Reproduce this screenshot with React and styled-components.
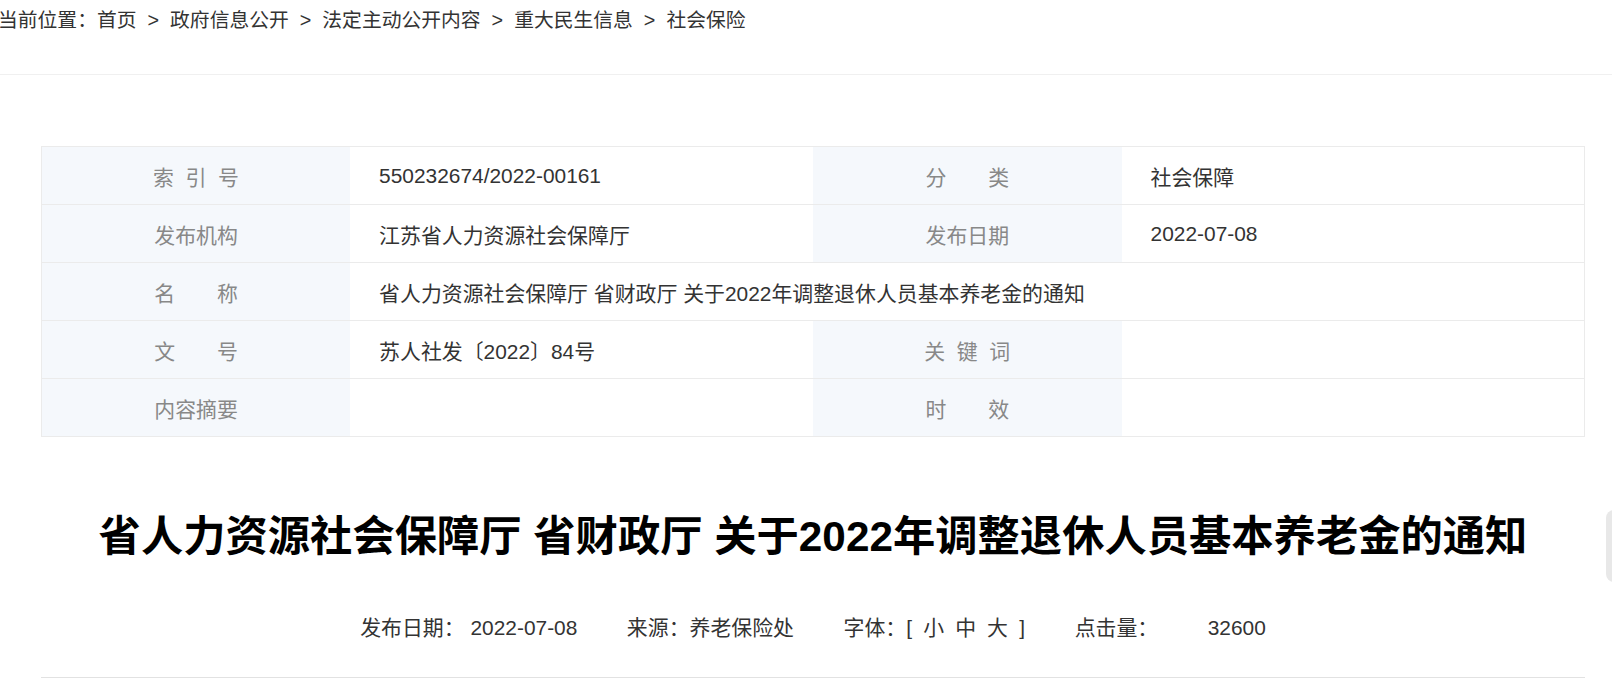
import React from 'react'
import styled, { createGlobalStyle } from 'styled-components'

const GlobalStyle = createGlobalStyle`
  html, body {
    margin: 0;
    padding: 0;
    background: #fff;
  }
  body {
    font-family: "Liberation Sans", "Noto Sans CJK SC", sans-serif;
    color: #333;
    overflow: hidden;
  }
`

const Header = styled.div`
  height: 74px;
  border-bottom: 1px solid #f0f0f0;
`

const Breadcrumb = styled.div`
  margin-left: -2px;
  font-size: 19.8px;
  line-height: 41px;
  color: #333;
  white-space: nowrap;
`

const Sep = styled.span`
  margin: 0 11px;
`

const Main = styled.div`
  margin: 71px 27px 0 41px;
`

const InfoTable = styled.table`
  width: 100%;
  border-collapse: collapse;
  table-layout: fixed;
  border: 1px solid #ebebeb;
  font-size: 20.9px;
`

const Row = styled.tr`
  height: 58px;
  border-bottom: 1px solid #ebebeb;
`

const Label = styled.td`
  box-sizing: border-box;
  width: 20%;
  background: #f5f8fc;
  color: #888;
  text-align: center;
  padding: 0;
  white-space: nowrap;
`

const Value = styled.td`
  box-sizing: border-box;
  width: 30%;
  background: #fff;
  color: #333;
  padding: 0 0 0 29px;
  white-space: nowrap;
`

const Title = styled.h1`
  margin: 70px 0 0;
  font-size: 42.3px;
  line-height: 60px;
  font-weight: bold;
  color: #000;
  text-align: center;
  white-space: nowrap;
`

const Meta = styled.div`
  display: flex;
  justify-content: center;
  gap: 49.5px;
  margin-top: 46px;
  padding-bottom: 34px;
  border-bottom: 1px solid #e2e2e2;
  font-size: 20.9px;
  line-height: 30px;
  color: #333;
  white-space: nowrap;
`

const FontSize = styled.span`
  padding: 0 5.5px;
  cursor: pointer;
`

const SideTab = styled.div`
  position: fixed;
  right: -44px;
  top: 510px;
  width: 50px;
  height: 72px;
  border-radius: 8px;
  background: #e8e8e8;
`

const crumbs = ['首页', '政府信息公开', '法定主动公开内容', '重大民生信息', '社会保险']

const nb = '\u00a0\u00a0'

export default function App() {
  return (
    <>
      <GlobalStyle />
      <Header>
        <Breadcrumb>
          当前位置：
          {crumbs.map((c, i) => (
            <React.Fragment key={c}>
              {i > 0 && <Sep>&gt;</Sep>}
              <span>{c}</span>
            </React.Fragment>
          ))}
        </Breadcrumb>
      </Header>
      <Main>
        <InfoTable>
          <tbody>
            <Row>
              <Label>{`索${nb}引${nb}号`}</Label>
              <Value>550232674/2022-00161</Value>
              <Label>分　　类</Label>
              <Value>社会保障</Value>
            </Row>
            <Row>
              <Label>发布机构</Label>
              <Value>江苏省人力资源社会保障厅</Value>
              <Label>发布日期</Label>
              <Value>2022-07-08</Value>
            </Row>
            <Row>
              <Label>名　　称</Label>
              <Value colSpan={3}>省人力资源社会保障厅 省财政厅 关于2022年调整退休人员基本养老金的通知</Value>
            </Row>
            <Row>
              <Label>文　　号</Label>
              <Value>苏人社发〔2022〕84号</Value>
              <Label>{`关${nb}键${nb}词`}</Label>
              <Value></Value>
            </Row>
            <Row>
              <Label>内容摘要</Label>
              <Value></Value>
              <Label>时　　效</Label>
              <Value></Value>
            </Row>
          </tbody>
        </InfoTable>
        <Title>省人力资源社会保障厅 省财政厅 关于2022年调整退休人员基本养老金的通知</Title>
        <Meta>
          <span>发布日期：{'\u00a0'}2022-07-08</span>
          <span>来源：养老保险处</span>
          <span>
            字体：[{' '}
            <FontSize>小</FontSize>
            <FontSize>中</FontSize>
            <FontSize>大</FontSize>
            {' '}]
          </span>
          <span>点击量：</span>
          <span>32600</span>
        </Meta>
      </Main>
      <SideTab />
    </>
  )
}
